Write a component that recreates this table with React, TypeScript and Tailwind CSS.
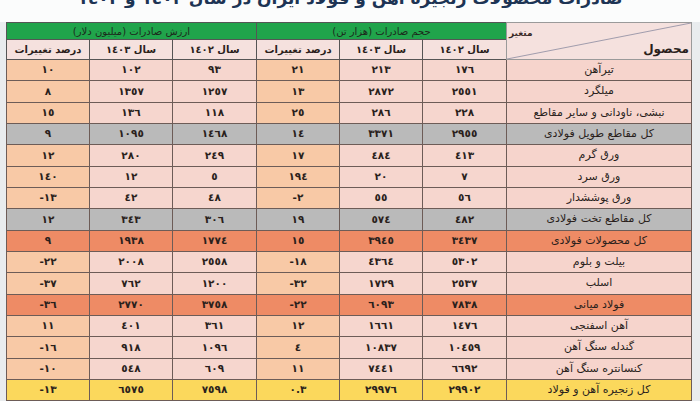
import React from 'react'

type Row = {
  name: string
  vals: string[] // [vol1402, vol1403, volPct, val1402, val1403, valPct]
  tone?: 'gray' | 'orange' | 'yellow'
}

const rows: Row[] = [
  { name: 'تیرآهن', vals: ['١٧٦', '٢١٣', '٢١', '٩٣', '١٠٢', '١٠'] },
  { name: 'میلگرد', vals: ['٢٥٥١', '٢٨٧٢', '١٣', '١٢٥٧', '١٣٥٧', '٨'] },
  { name: 'نبشی، ناودانی و سایر مقاطع', vals: ['٢٢٨', '٢٨٦', '٢٥', '١١٨', '١٣٦', '١٥'] },
  { name: 'کل مقاطع طویل فولادی', vals: ['٢٩٥٥', '٣٣٧١', '١٤', '١٤٦٨', '١٠٩٥', '٩'], tone: 'gray' },
  { name: 'ورق گرم', vals: ['٤١٣', '٤٨٤', '١٧', '٢٤٩', '٢٨٠', '١٢'] },
  { name: 'ورق سرد', vals: ['٧', '٢٠', '١٩٤', '٥', '١٢', '١٤٠'] },
  { name: 'ورق پوششدار', vals: ['٥٦', '٥٥', '-٢', '٤٨', '٤٢', '-١٣'] },
  { name: 'کل مقاطع تخت فولادی', vals: ['٤٨٢', '٥٧٤', '١٩', '٣٠٦', '٣٤٣', '١٢'], tone: 'gray' },
  { name: 'کل محصولات فولادی', vals: ['٣٤٣٧', '٣٩٤٥', '١٥', '١٧٧٤', '١٩٣٨', '٩'], tone: 'orange' },
  { name: 'بیلت و بلوم', vals: ['٥٣٠٢', '٤٣٦٤', '-١٨', '٢٥٥٨', '٢٠٠٨', '-٢٢'] },
  { name: 'اسلب', vals: ['٢٥٣٧', '١٧٢٩', '-٣٢', '١٢٠٠', '٧٦٢', '-٣٧'] },
  { name: 'فولاد میانی', vals: ['٧٨٣٨', '٦٠٩٣', '-٢٢', '٣٧٥٨', '٢٧٧٠', '-٣٦'], tone: 'orange' },
  { name: 'آهن اسفنجی', vals: ['١٤٧٦', '١٦٦١', '١٢', '٣٦١', '٤٠١', '١١'] },
  { name: 'گندله سنگ آهن', vals: ['١٠٤٥٩', '١٠٨٣٧', '٤', '١٠٩٦', '٩١٨', '-١٦'] },
  { name: 'کنسانتره سنگ آهن', vals: ['٦٦٩٢', '٧٤٤١', '١١', '٦٠٩', '٥٤٨', '-١٠'] },
  { name: 'کل زنجیره آهن و فولاد', vals: ['٢٩٩٠٢', '٢٩٩٧٦', '٠.٣', '٧٥٩٨', '٦٥٧٥', '-١٣'], tone: 'yellow' },
]

function cellBg(tone: Row['tone'], isPct: boolean, isName: boolean) {
  if (tone === 'gray') return 'bg-[#bababa]'
  if (tone === 'orange') return 'bg-[#ee8b65]'
  if (tone === 'yellow') return 'bg-[#fbd85c]'
  if (isName) return 'bg-[#f6d4cc]'
  return isPct ? 'bg-[#f8c9a6]' : 'bg-[#f6d6ce]'
}

export default function App() {
  return (
    <div className="w-[700px] h-[401px] overflow-hidden bg-[#e9ecee] font-['DejaVu_Sans',sans-serif]" dir="rtl">
      <div className="h-[22px] bg-[#fbfcfc] overflow-hidden flex justify-center">
        <div className="-mt-[12px] text-[17px] leading-[20px] font-bold text-[#1d3454]">
          صادرات محصولات زنجیره آهن و فولاد ایران در سال ١٤٠٢ و ١٤٠٣
        </div>
      </div>

      <table className="mr-[8px] w-[685px] table-fixed border-collapse text-[#2a1f1c]">
        <colgroup>
          <col className="w-[185px]" />
          <col className="w-[84px]" />
          <col className="w-[83px]" />
          <col className="w-[83px]" />
          <col className="w-[84px]" />
          <col className="w-[83px]" />
          <col className="w-[83px]" />
        </colgroup>
        <thead>
          <tr className="h-[17px]">
            <th rowSpan={2} className="relative p-0 border border-[#9a9a9a] bg-[#f5e1de] font-normal">
              <svg className="absolute inset-0 w-full h-full" preserveAspectRatio="none" viewBox="0 0 185 36">
                <line x1="0" y1="36" x2="185" y2="0" stroke="#8a8aa0" strokeWidth="0.8" />
              </svg>
              <div className="relative h-[36px]">
                <span className="absolute left-[2px] top-[4px] text-[9px] font-bold text-[#3a2a28]">متغیر</span>
                <span className="absolute right-[2px] bottom-[1px] text-[12px] font-bold text-[#2a1f1c]">محصول</span>
              </div>
            </th>
            <th colSpan={3} className="p-0 border border-[#555] bg-[#20a44b] text-[10px] font-normal text-[#1c2a1c]">
              حجم صادرات (هزار تن)
            </th>
            <th colSpan={3} className="p-0 border border-[#555] bg-[#20a44b] text-[10px] font-normal text-[#1c2a1c]">
              ارزش صادرات (میلیون دلار)
            </th>
          </tr>
          <tr className="h-[19px] bg-[#f5e1de] text-[10px] font-bold">
            <th className="p-0 border border-[#555]">سال ١٤٠٢</th>
            <th className="p-0 border border-[#555]">سال ١٤٠٣</th>
            <th className="p-0 border border-[#555]">درصد تغییرات</th>
            <th className="p-0 border border-[#555]">سال ١٤٠٢</th>
            <th className="p-0 border border-[#555]">سال ١٤٠٣</th>
            <th className="p-0 border border-[#555]">درصد تغییرات</th>
          </tr>
        </thead>
        <tbody>
          {rows.map((r) => (
            <tr key={r.name} className="h-[21.33px]">
              <td className={`p-0 border border-[#6d5c57] text-center text-[11px] ${cellBg(r.tone, false, true)}`}>
                {r.name}
              </td>
              {r.vals.map((v, i) => (
                <td
                  key={i}
                  dir="ltr"
                  className={`p-0 border border-[#6d5c57] text-center text-[10.5px] font-bold ${cellBg(r.tone, i === 2 || i === 5, false)}`}
                >
                  {v}
                </td>
              ))}
            </tr>
          ))}
        </tbody>
      </table>
    </div>
  )
}
